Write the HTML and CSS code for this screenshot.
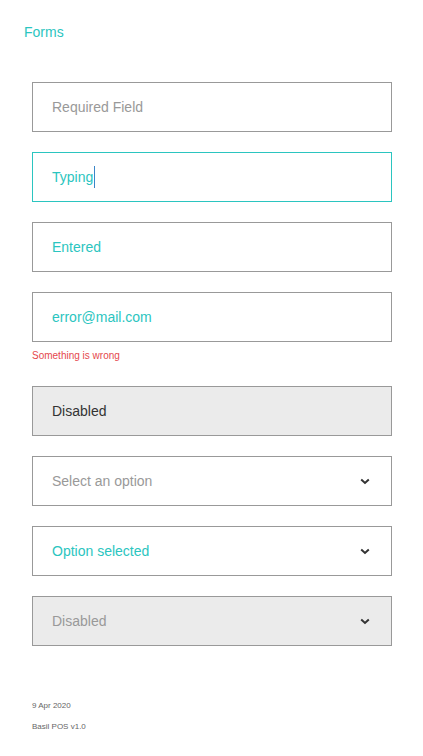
FILE: index.html
```html
<!DOCTYPE html>
<html>
<head>
<meta charset="utf-8">
<link rel="stylesheet" href="styles.css">
</head>
<body>
<div class="page">
  <h1 class="title">Forms</h1>
  <div class="form">
    <div class="field"><div class="box"><span class="placeholder">Required Field</span></div></div>
    <div class="field"><div class="box focus"><span class="value">Typing</span><span class="caret"></span></div></div>
    <div class="field"><div class="box"><span class="value">Entered</span></div></div>
    <div class="field error-field"><div class="box"><span class="value">error@mail.com</span></div><div class="error">Something is wrong</div></div>
    <div class="field"><div class="box disabled"><span class="dis-text">Disabled</span></div></div>
    <div class="field"><div class="box select"><span class="placeholder">Select an option</span><svg class="chev" width="10" height="7" viewBox="0 0 10 7"><path d="M1.2 1.5 L5 5 L8.8 1.5" fill="none" stroke="#333" stroke-width="2"/></svg></div></div>
    <div class="field"><div class="box select"><span class="value">Option selected</span><svg class="chev" width="10" height="7" viewBox="0 0 10 7"><path d="M1.2 1.5 L5 5 L8.8 1.5" fill="none" stroke="#333" stroke-width="2"/></svg></div></div>
    <div class="field"><div class="box select disabled"><span class="placeholder">Disabled</span><svg class="chev" width="10" height="7" viewBox="0 0 10 7"><path d="M1.2 1.5 L5 5 L8.8 1.5" fill="none" stroke="#333" stroke-width="2"/></svg></div></div>
  </div>
  <footer class="footer">
    <div>9 Apr 2020</div>
    <div>Basil POS v1.0</div>
  </footer>
</div>
</body>
</html>
```
FILE: styles.css
```css
* { box-sizing: border-box; }
html, body { margin: 0; padding: 0; background: #fff; }
body { font-family: "Liberation Sans", Arial, sans-serif; }
.page { width: 423px; padding: 24px 0 0 0; }
.title {
  margin: 0 0 0 24px;
  font-size: 14px;
  font-weight: normal;
  line-height: 16px;
  color: #2bc5c0;
}
.form {
  margin: 42px 0 0 32px;
  width: 360px;
  display: flex;
  flex-direction: column;
  gap: 20px;
}
.box {
  height: 50px;
  border: 1px solid #999;
  background: #fff;
  display: flex;
  align-items: center;
  padding: 0 19px;
  font-size: 14px;
}
.box.focus { border-color: #2bc5c0; }
.box.disabled { background: #ebebeb; }
.placeholder { color: #999; }
.value { color: #2bc5c0; }
.dis-text { color: #333; }
.caret {
  display: inline-block;
  width: 1px;
  height: 22px;
  background: #3a86c8;
  margin-left: 1px;
}
.select { justify-content: space-between; padding-right: 21px; }
.chev { display: block; margin-top: 1px; }
.error {
  margin-top: 8px;
  font-size: 10px;
  line-height: 12px;
  color: #e5484d;
}
.error-field { margin-bottom: 4px; }
.footer {
  margin: 55px 0 0 32px;
  font-size: 8px;
  color: #666;
  display: flex;
  flex-direction: column;
  gap: 11px;
  line-height: 10px;
}
```
